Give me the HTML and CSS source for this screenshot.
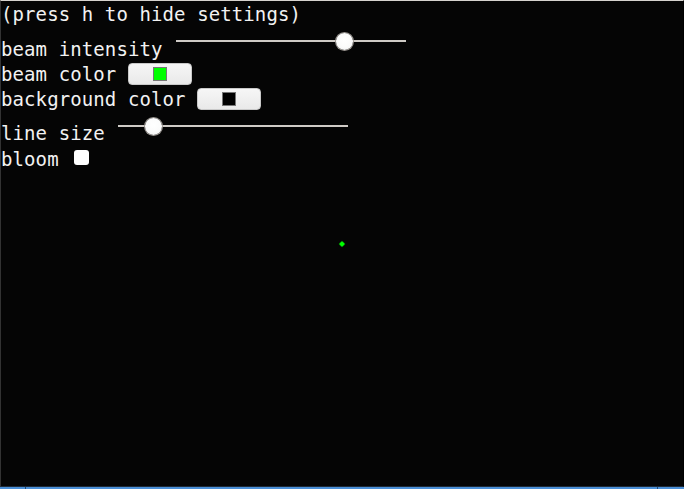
FILE: index.html
```html
<!DOCTYPE html>
<html>
<head>
<meta charset="utf-8">
<link rel="stylesheet" href="styles.css">
</head>
<body>
<div class="screen">
  <div class="view">
    <div class="settings">
      <div class="row row-hint"><span class="label">(press h to hide settings)</span></div>
      <div class="row row-slider row-intensity">
        <span class="label">beam intensity</span>
        <input class="slider intensity" type="range" min="0" max="100" value="75.5" step="0.1">
      </div>
      <div class="row row-color row-beam">
        <span class="label">beam color</span>
        <button class="swatch-btn beam-btn"><span class="swatch green"></span></button>
      </div>
      <div class="row row-color row-bg">
        <span class="label">background color</span>
        <button class="swatch-btn bg-btn"><span class="swatch black"></span></button>
      </div>
      <div class="row row-slider row-line">
        <span class="label">line size</span>
        <input class="slider linesize" type="range" min="0" max="100" value="12.6" step="0.1">
      </div>
      <div class="row row-bloom">
        <span class="label">bloom</span>
        <span class="check"></span>
      </div>
    </div>
    <span class="dot"></span>
  </div>
  <div class="taskbar">
    <span class="tb-start"></span>
    <span class="tb-main"></span>
    <span class="tb-end"></span>
  </div>
</div>
</body>
</html>
```
FILE: styles.css
```css
html, body {
  margin: 0;
  padding: 0;
  background: #000;
}
.screen {
  width: 684px;
  height: 489px;
  display: flex;
  flex-direction: column;
  overflow: hidden;
}
.view {
  position: relative;
  flex: 1;
  background: #050505;
  border-top: 1px solid #d6d3cf;
  border-left: 1px solid #333;
  border-right: 1px solid #000;
  border-bottom: 1px solid #1f2a36;
  font-family: "DejaVu Sans Mono", "Liberation Mono", monospace;
  font-size: 19px;
  letter-spacing: 0.1px;
  color: #f2f2f2;
}
.settings {
  display: flex;
  flex-direction: column;
  padding-top: 2px;
}
.row {
  display: flex;
  align-items: flex-start;
}
.label {
  display: block;
  line-height: 22px;
  white-space: pre;
}
.row-intensity { margin-top: 7px; }
.row-intensity .label { margin-top: 6px; }
.row-beam { margin-top: 3px; }
.row-bg { margin-top: 3px; }
.row-line { margin-top: 7px; }
.row-line .label { margin-top: 5px; }
.row-bloom { margin-top: 4px; }

.slider {
  -webkit-appearance: none;
  appearance: none;
  width: 230px;
  height: 18px;
  margin: 0;
  padding: 0;
  background: transparent;
}
.intensity { margin-left: 13px; }
.linesize { margin-left: 13px; }
.slider::-webkit-slider-runnable-track {
  height: 2px;
  background: #cfcbc6;
  border: none;
}
.slider::-webkit-slider-thumb {
  -webkit-appearance: none;
  appearance: none;
  width: 17px;
  height: 17px;
  margin-top: -7.5px;
  border-radius: 50%;
  background: radial-gradient(circle at 50% 40%, #ffffff 0%, #fbfbfb 55%, #ececec 100%);
  box-shadow: 0 0 0 1px #9a9590;
}

.swatch-btn {
  display: flex;
  align-items: center;
  justify-content: center;
  width: 64px;
  height: 22px;
  margin: 0;
  padding: 0;
  border: 1px solid #c9c9c9;
  border-radius: 4px;
  background: linear-gradient(#f6f6f6, #e9e9e9);
}
.beam-btn { margin-left: 12px; }
.bg-btn { margin-left: 11.5px; }
.swatch {
  display: block;
  width: 12px;
  height: 12px;
  border: 1px solid #767676;
}
.swatch.green { background: #00ff00; }
.swatch.black { background: #000; }

.check {
  display: block;
  width: 15px;
  height: 15px;
  margin-left: 15.5px;
  margin-top: 2px;
  border-radius: 3px;
  background: #fff;
}

.dot {
  position: absolute;
  left: 339px;
  top: 241px;
  width: 4px;
  height: 4px;
  background: #00ff00;
  transform: rotate(45deg);
  box-shadow: 0 0 1px #00ff00;
}

.taskbar {
  display: flex;
  height: 2px;
  background: #4b90d8;
}
.tb-start {
  width: 25px;
  border-right: 1px solid #1e4a78;
}
.tb-main {
  flex: 1;
  border-right: 1px solid #1e4a78;
}
.tb-end {
  width: 26px;
}
```
